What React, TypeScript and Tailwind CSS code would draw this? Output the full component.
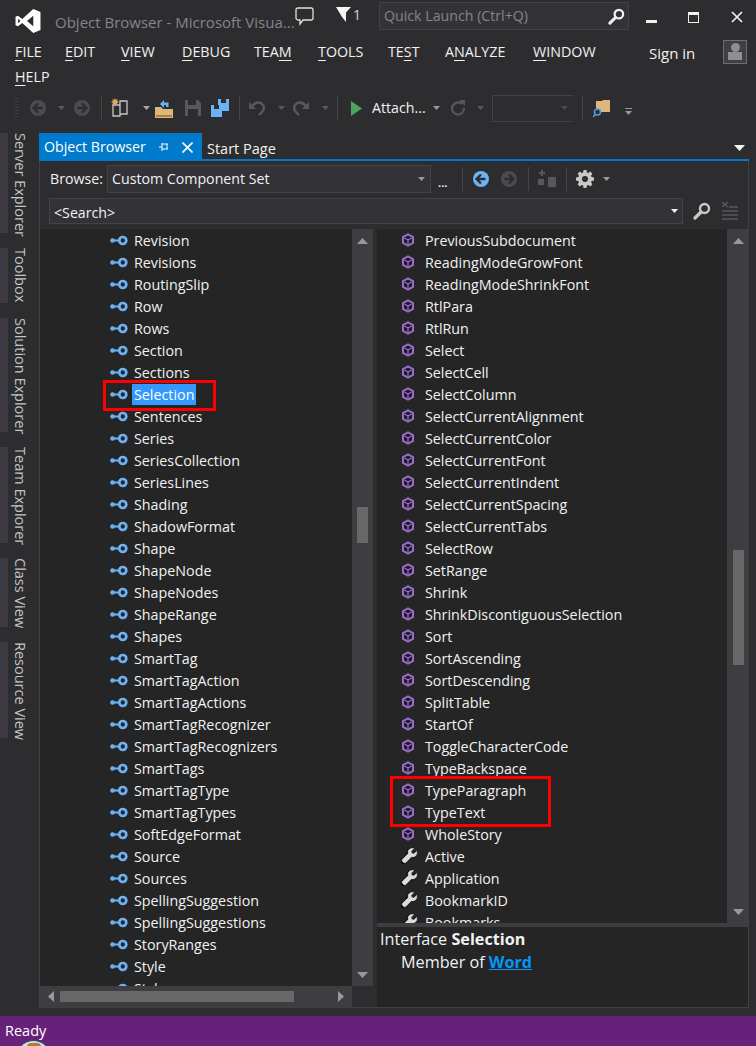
import React from "react";

const leftNames = ["Revision","Revisions","RoutingSlip","Row","Rows","Section","Sections","Selection","Sentences","Series","SeriesCollection","SeriesLines","Shading","ShadowFormat","Shape","ShapeNode","ShapeNodes","ShapeRange","Shapes","SmartTag","SmartTagAction","SmartTagActions","SmartTagRecognizer","SmartTagRecognizers","SmartTags","SmartTagType","SmartTagTypes","SoftEdgeFormat","Source","Sources","SpellingSuggestion","SpellingSuggestions","StoryRanges","Style","Styles"];
const methods = ["PreviousSubdocument","ReadingModeGrowFont","ReadingModeShrinkFont","RtlPara","RtlRun","Select","SelectCell","SelectColumn","SelectCurrentAlignment","SelectCurrentColor","SelectCurrentFont","SelectCurrentIndent","SelectCurrentSpacing","SelectCurrentTabs","SelectRow","SetRange","Shrink","ShrinkDiscontiguousSelection","Sort","SortAscending","SortDescending","SplitTable","StartOf","ToggleCharacterCode","TypeBackspace","TypeParagraph","TypeText","WholeStory"];
const props = ["Active","Application","BookmarkID","Bookmarks"];

const Caret = ({ c = "#999999", cls = "" }: { c?: string; cls?: string }) => (
  <svg width="7" height="4" viewBox="0 0 7 4" className={cls}><path d="M0 0h7L3.5 4z" fill={c} /></svg>
);
const Sep = ({ cls = "" }: { cls?: string }) => <div className={"w-px h-[24px] bg-[#46464a] " + cls} />;

const InterfaceIcon = () => (
  <svg width="18" height="11" viewBox="0 0 18 11">
    <circle cx="2.5" cy="5.5" r="2.3" fill="#6cb3f5" />
    <rect x="4" y="4.500" width="5" height="2" fill="#6cb3f5" />
    <circle cx="12.8" cy="5.500" r="3.500" fill="none" stroke="#6cb3f5" strokeWidth="2.700" />
  </svg>
);
const CubeIcon = () => (
  <svg width="14" height="14" viewBox="0 0 14 14">
    <path d="M7 1.300 12 4.100v5.800L7 12.700 2 9.900V4.100z" fill="#1d1a22" stroke="#9a6cc9" strokeWidth="2" />
    <path d="M3.500 5 7 7l3.500-2M7 7v4" fill="none" stroke="#9a6cc9" strokeWidth="1.300" />
  </svg>
);
const WrenchIcon = () => (
  <svg width="17" height="16" viewBox="0 0 17 16">
    <path d="M15.500 3.400 12.800 6 10.500 5.500 10 3.300 12.600.8C10.400.1 8 1 7.300 3.100c-.3 1-.2 1.900.1 2.600L1.700 11c-.7.700-.7 1.800 0 2.500l.8.800c.7.700 1.800.7 2.500 0l5.400-5.600c.9.300 2 .3 3-.1 1.900-.9 2.800-3 2.100-5.200z" fill="#000000" stroke="#000000" strokeWidth="1.600" transform="translate(-.8 .6)" />
    <path d="M15.500 3.400 12.800 6 10.500 5.500 10 3.300 12.600.8C10.400.1 8 1 7.300 3.100c-.3 1-.2 1.900.1 2.600L1.700 11c-.7.700-.7 1.800 0 2.500l.8.800c.7.700 1.800.7 2.500 0l5.400-5.600c.9.300 2 .3 3-.1 1.900-.9 2.800-3 2.100-5.200z" fill="#dcdcdc" stroke="#dcdcdc" strokeWidth=".7" />
  </svg>
);

const Row = ({ icon, name, indentCls, selected }: { icon: React.ReactNode; name: string; indentCls: string; selected?: boolean }) => (
  <div className={"h-[22px] shrink-0 flex items-center text-[14.3px] " + indentCls}>
    <div className="w-[22px] flex justify-start items-center shrink-0">{icon}</div>
    <span className={"h-[21px] leading-[21px] px-[2px] whitespace-nowrap " + (selected ? "bg-[#3399ff] text-white" : "")}>{name}</span>
  </div>
);

const Gear = () => (
  <svg width="18" height="18" viewBox="0 0 18 18">
    <path d="M7.5 0h3l.4 2.4 1.4.6 2-1.4 2.1 2.1-1.4 2 .6 1.4L18 7.5v3l-2.4.4-.6 1.4 1.4 2-2.1 2.1-2-1.4-1.4.6-.4 2.4h-3l-.4-2.4-1.4-.6-2 1.4-2.1-2.1 1.4-2-.6-1.4L0 10.500v-3l2.400-.4.6-1.4-1.400-2 2.100-2.100 2 1.400 1.400-.6z" fill="#c8c8c8" />
    <circle cx="9" cy="9" r="3" fill="#2d2d30" />
  </svg>
);
const Round = ({ bg, fg }: { bg: string; fg: string }) => (
  <svg width="16" height="16" viewBox="0 0 16 16">
    <circle cx="8" cy="8" r="8" fill={bg} />
    <path d="M8 3.500 3.500 8 8 12.500M4 8h8.500" fill="none" stroke={fg} strokeWidth="2.300" />
  </svg>
);
const RoundR = ({ bg, fg }: { bg: string; fg: string }) => (
  <svg width="16" height="16" viewBox="0 0 16 16">
    <circle cx="8" cy="8" r="8" fill={bg} />
    <path d="M8 3.500 12.500 8 8 12.500M12 8H3.500" fill="none" stroke={fg} strokeWidth="2.300" />
  </svg>
);
const Magnifier = ({ size = 18, c = "#d0d0d0" }: { size?: number; c?: string }) => (
  <svg width={size} height={size} viewBox="0 0 18 18">
    <circle cx="11.500" cy="6.500" r="4.500" fill="none" stroke={c} strokeWidth="2.400" />
    <path d="M8 10 2 16" stroke={c} strokeWidth="3.200" strokeLinecap="round" />
  </svg>
);

const Menu = ({ w, pre, u, post }: { w: string; pre?: string; u: string; post?: string }) => (
  <div className={"text-[14.3px] whitespace-nowrap shrink-0 " + w}>
    {pre}<span className="underline underline-offset-[3px] decoration-1">{u}</span>{post}
  </div>
);

const RailTab = ({ label, h }: { label: string; h: string }) => (
  <div className={"flex shrink-0 " + h}>
    <div className="w-[8px] bg-[#3a3a40] shrink-0" />
    <div className="ml-[5px] text-[#c4c4c4] text-[14.5px] leading-[15px] whitespace-nowrap [writing-mode:vertical-rl]">{label}</div>
  </div>
);

export default function App() {
  return (
    <div className="relative w-[756px] h-[1046px] overflow-hidden flex flex-col bg-[#2d2d30] text-[#f1f1f1] font-['Open_Sans',sans-serif] text-[14px]">
      {/* title bar */}
      <div className="h-[40px] shrink-0 flex items-start">
        <svg width="26" height="24" viewBox="0 0 26 25" className="ml-[15px] mt-[9px] shrink-0">
          <path d="M18.500 0 26 3v19l-7.500 3L7 14.500 2.500 18 0 16.800V8.200L2.500 7 7 10.500zM18.500 7 12 12.500l6.500 5.500zM2.800 10.200v4.600l2.400-2.300z" fill="#ffffff" fillRule="evenodd" />
        </svg>
        <div className="ml-[14px] mt-[11px] text-[15px] leading-[22px] text-[#85858b] whitespace-nowrap w-[240px] shrink-0">Object Browser - Microsoft Visua...</div>
        <svg width="19" height="19" viewBox="0 0 19 19" className="mt-[7px] shrink-0">
          <path d="M3 1h13a2 2 0 0 1 2 2v8a2 2 0 0 1-2 2H8l-3 4v-4H3a2 2 0 0 1-2-2V3a2 2 0 0 1 2-2z" fill="none" stroke="#e0e0e0" strokeWidth="1.300" />
        </svg>
        <svg width="15" height="16" viewBox="0 0 15 16" className="ml-[22px] mt-[7px] shrink-0"><path d="M0 0h15L10 5.500V15L6 10z" fill="#f4f4f4" /></svg>
        <div className="ml-[2px] mt-[5px] text-[14px] leading-[20px] text-[#d8d8d8] w-[26px] shrink-0">1</div>
        <div className="mt-[2px] w-[250px] h-[28px] shrink-0 bg-[#333337] border border-[#434346] flex items-center pl-[4px] pr-[3px] justify-between text-[#85858b] text-[14.2px]">
          <span>Quick Launch (Ctrl+Q)</span>
          <Magnifier size={17} c="#f1f1f1" />
        </div>
        <div className="ml-[17px] mt-[20px] w-[11px] h-[3px] bg-[#f1f1f1] shrink-0" />
        <div className="ml-[31px] mt-[12px] w-[11px] h-[11px] border border-[#f1f1f1] border-t-[3px] shrink-0" />
        <svg width="12" height="12" viewBox="0 0 12 12" className="ml-[32px] mt-[11px] shrink-0"><path d="M1 1l10 10M11 1 1 11" stroke="#f1f1f1" strokeWidth="1.700" /></svg>
      </div>
      {/* menu */}
      <div className="h-[25px] shrink-0 flex items-center pl-[15px] pb-[2px]">
        <Menu w="w-[50px]" u="F" post="ILE" />
        <Menu w="w-[56px]" u="E" post="DIT" />
        <Menu w="w-[61px]" u="V" post="IEW" />
        <Menu w="w-[72px]" u="D" post="EBUG" />
        <Menu w="w-[64px]" pre="TEA" u="M" />
        <Menu w="w-[70px]" u="T" post="OOLS" />
        <Menu w="w-[57px]" pre="TE" u="S" post="T" />
        <Menu w="w-[88px]" pre="A" u="N" post="ALYZE" />
        <Menu w="w-[116px]" u="W" post="INDOW" />
        <div className="w-[74px] text-[15px] shrink-0 mt-[3px]">Sign in</div>
        <div className="w-[24px] h-[24px] shrink-0 border border-[#6e6e6e] bg-[#3f3f46] flex flex-col items-center justify-end">
          <div className="w-[9px] h-[9px] rounded-full bg-[#8f8f8f]" />
          <div className="w-[14px] h-[8px] bg-[#8f8f8f] mb-[3px]" />
        </div>
      </div>
      <div className="h-[25px] shrink-0 flex items-center pl-[15px] pb-[2px]">
        <Menu w="w-[50px]" u="H" post="ELP" />
      </div>
      {/* toolbar */}
      <div className="h-[28px] mt-[4px] shrink-0 flex items-center">
        <div className="ml-[15px] w-[4px] h-[22px] shrink-0 [background-image:radial-gradient(#3c3c40_0.7px,transparent_0.8px)] [background-size:2px_3px]" />
        <div className="ml-[11px] shrink-0"><Round bg="#4c4c50" fg="#2d2d30" /></div>
        <Caret c="#5a5a5e" cls="ml-[12px] shrink-0" />
        <div className="ml-[9px] shrink-0"><RoundR bg="#4c4c50" fg="#2d2d30" /></div>
        <Sep cls="ml-[11px] shrink-0" />
        <svg width="18" height="20" viewBox="0 0 18 20" className="ml-[9px] shrink-0">
          <path d="M2 7h7v11H2zM9 3h7v13H9z" fill="#2d2d30" stroke="#c8c8c8" strokeWidth="1.300" />
          <path d="M4 0l1 2 2-1-1 2 2 1-2 1 1 2-2-1-1 2-1-2-2 1 1-2-2-1 2-1-1-2 2 1z" fill="#d8a860" />
        </svg>
        <Caret c="#aaaaaa" cls="ml-[14px] shrink-0" />
        <svg width="18" height="19" viewBox="0 0 18 19" className="ml-[5px] shrink-0">
          <path d="M0 8h6l2 2h10v9H0z" fill="#dcb67a" />
          <path d="M1 16h16v2H1z" fill="#a87f3e" />
          <path d="M5 5 9 1v2.500h4.500V8H11V6H9v3z" fill="#6cb3f5" />
        </svg>
        <svg width="16" height="16" viewBox="0 0 16 16" className="ml-[12px] shrink-0"><path d="M0 0h13l3 3v13H0zM3 0v5h8V0zM3 9v7h10V9z" fill="#58585c" fillRule="evenodd" /></svg>
        <svg width="18" height="18" viewBox="0 0 18 18" className="ml-[10px] shrink-0">
          <path d="M7 0h11v12H7z" fill="#6cb3f5" /><path d="M0 6h11v12H0z" fill="#6cb3f5" />
          <path d="M10 0h5v4h-5zM3 6h5v4H3z" fill="#2d2d30" />
        </svg>
        <Sep cls="ml-[10px] shrink-0" />
        <svg width="16" height="16" viewBox="0 0 16 16" className="ml-[9px] shrink-0"><path d="M3 7C5 2 11 1 14 5c2 3 0 7-4 10" fill="none" stroke="#58585c" strokeWidth="2.600" /><path d="M0 2v7h7z" fill="#58585c" /></svg>
        <Caret c="#58585c" cls="ml-[13px] shrink-0" />
        <svg width="16" height="16" viewBox="0 0 16 16" className="ml-[8px] shrink-0"><path d="M13 7C11 2 5 1 2 5c-2 3 0 7 4 10" fill="none" stroke="#58585c" strokeWidth="2.600" /><path d="M16 2v7H9z" fill="#58585c" /></svg>
        <Caret c="#58585c" cls="ml-[13px] shrink-0" />
        <Sep cls="ml-[8px] shrink-0" />
        <svg width="12" height="15" viewBox="0 0 12 15" className="ml-[13px] shrink-0"><path d="M0 0l11 7.500L0 15z" fill="#4ea45c" /></svg>
        <div className="ml-[9px] text-[14.2px] shrink-0 w-[57px] whitespace-nowrap">Attach...</div>
        <Caret c="#999999" cls="ml-[4px] shrink-0" />
        <svg width="16" height="16" viewBox="0 0 16 16" className="ml-[10px] shrink-0"><path d="M12 4a6 6 0 1 0 2 4" fill="none" stroke="#58585c" strokeWidth="2.200" /><path d="M9 0h6v6z" fill="#58585c" /></svg>
        <Caret c="#58585c" cls="ml-[11px] shrink-0" />
        <div className="ml-[8px] w-[81px] h-[27px] shrink-0 border-l border-t border-b border-[#434346] flex items-center justify-end pr-[5px]"><Caret c="#4c4c50" /></div>
        <Sep cls="ml-[9px] shrink-0" />
        <svg width="18" height="19" viewBox="0 0 18 19" className="ml-[10px] shrink-0">
          <path d="M3 2h6l1-1h7v12H3z" fill="#dcb67a" />
          <circle cx="4.500" cy="13" r="3" fill="#2d2d30" stroke="#4e9de6" strokeWidth="1.500" /><path d="M2.500 15.500 0 18" stroke="#4e9de6" strokeWidth="1.600" />
        </svg>
        <div className="ml-[14px] mt-[7px] flex flex-col items-center shrink-0 gap-[2px]"><div className="w-[7px] h-px bg-[#999]" /><Caret c="#999999" /></div>
      </div>
      {/* body */}
      <div className="flex mt-[11px] flex-1 min-h-0 h-0">
        {/* rail */}
        <div className="w-[39px] shrink-0 flex flex-col gap-[15px]">
          <RailTab label="Server Explorer" h="h-[100px]" />
          <RailTab label="Toolbox" h="h-[55px]" />
          <RailTab label="Solution Explorer" h="h-[114px]" />
          <RailTab label="Team Explorer" h="h-[96px]" />
          <RailTab label="Class View" h="h-[69px]" />
          <RailTab label="Resource View" h="h-[96px]" />
        </div>
        {/* document well */}
        <div className="w-[710px] shrink-0 flex flex-col">
          {/* tabs */}
          <div className="h-[28px] shrink-0 flex border-b-[2px] border-[#007acc]">
            <div className="w-[163px] h-[28px] shrink-0 bg-[#007acc] flex items-center pl-[5px] text-white text-[14.2px]">
              <span className="w-[115px] whitespace-nowrap">Object Browser</span>
              <svg width="10" height="10" viewBox="0 0 10 10" className="shrink-0"><path d="M0 5h3M3 1v8M3 2h6M3 7h6M8 2v5" stroke="#fff" fill="none" /></svg>
              <svg width="11" height="11" viewBox="0 0 11 11" className="ml-[13px] shrink-0"><path d="M.5.500l10 10M10.500.500l-10 10" stroke="#fff" strokeWidth="1.600" /></svg>
            </div>
            <div className="ml-[5px] text-[14.5px] pt-[5px] flex-1 whitespace-nowrap">Start Page</div>
            <div className="w-[14px] shrink-0 mr-[1px] pt-[12px] flex"><svg width="11" height="6" viewBox="0 0 11 6"><path d="M0 0h11L5.500 6z" fill="#f1f1f1" /></svg></div>
          </div>
          {/* object browser frame */}
          <div className="flex-1 min-h-0 flex flex-col border-l border-r border-b border-[#3f3f46]">
            {/* browse row */}
            <div className="h-[35px] shrink-0 flex items-center pl-[10px]">
              <span className="w-[57px] shrink-0 text-[14.2px]">Browse:</span>
              <div className="w-[324px] h-[28px] shrink-0 bg-[#333337] border border-[#434346] flex items-center justify-between pl-[4px] pr-[5px] text-[14.2px]">
                <span>Custom Component Set</span><Caret c="#999999" />
              </div>
              <span className="w-[31px] shrink-0 pl-[7px] text-[11px] leading-[10px] mt-[8px] font-bold">...</span>
              <Sep cls="shrink-0" />
              <div className="ml-[10px] shrink-0"><Round bg="#6cb3f5" fg="#2d2d30" /></div>
              <div className="ml-[12px] shrink-0"><RoundR bg="#4c4c50" fg="#2d2d30" /></div>
              <Sep cls="ml-[11px] shrink-0" />
              <svg width="18" height="17" viewBox="0 0 18 17" className="ml-[9px] shrink-0"><path d="M3 0h2v2h2v2H5v2H3V4H1V2h2zM0 9h6v6H0zM10 7h8v10h-8z" fill="#58585c" /></svg>
              <Sep cls="ml-[10px] shrink-0" />
              <div className="ml-[9px] shrink-0"><Gear /></div>
              <Caret c="#999999" cls="ml-[9px] shrink-0" />
            </div>
            {/* search row */}
            <div className="h-[26px] mt-[2px] shrink-0 flex items-center pl-[9px]">
              <div className="w-[634px] h-[26px] shrink-0 bg-[#333337] border border-[#434346] flex items-center justify-between pl-[4px] pr-[4px] text-[14.2px]">
                <span className="mt-[4px]">&lt;Search&gt;</span><Caret c="#f1f1f1" />
              </div>
              <div className="ml-[10px] shrink-0"><Magnifier size={18} c="#c8c8c8" /></div>
              <svg width="16" height="18" viewBox="0 0 16 18" className="ml-[11px] shrink-0">
                <path d="M0 0l6 5M6 0 0 5M7 5h9M0 9h16M0 13h16M0 17h16" stroke="#58585c" strokeWidth="1.500" fill="none" />
              </svg>
            </div>
            {/* panes */}
            <div className="mt-[5px] flex-1 min-h-0 flex">
              {/* left pane */}
              <div className="w-[333px] shrink-0 flex flex-col">
                <div className="flex-1 min-h-0 flex">
                  <div className="w-[312px] shrink-0 bg-[#252526] overflow-hidden flex flex-col">
                    {leftNames.map((n) => (
                      <Row key={n} icon={<InterfaceIcon />} name={n} indentCls="pl-[70px]" selected={n === "Selection"} />
                    ))}
                  </div>
                  <div className="w-[21px] shrink-0 bg-[#3e3e42] flex flex-col items-center">
                    <svg width="11" height="6" viewBox="0 0 11 6" className="mt-[9px] shrink-0"><path d="M0 6h11L5.500 0z" fill="#999999" /></svg>
                    <div className="w-[11px] h-[36px] mt-[263px] bg-[#686868] shrink-0" />
                    <svg width="11" height="6" viewBox="0 0 11 6" className="mt-auto mb-[8px] shrink-0"><path d="M0 0h11L5.500 6z" fill="#999999" /></svg>
                  </div>
                </div>
                <div className="h-[21px] shrink-0 flex">
                  <div className="w-[312px] shrink-0 bg-[#3e3e42] flex items-center">
                    <svg width="6" height="11" viewBox="0 0 6 11" className="ml-[8px] shrink-0"><path d="M6 0v11L0 5.500z" fill="#999999" /></svg>
                    <div className="ml-[6px] w-[234px] h-[11px] bg-[#686868] shrink-0" />
                    <svg width="6" height="11" viewBox="0 0 6 11" className="ml-[44px] shrink-0"><path d="M0 0v11l6-5.500z" fill="#999999" /></svg>
                  </div>
                </div>
              </div>
              {/* right pane */}
              <div className="ml-[4px] flex-1 min-w-0 flex flex-col">
                <div className="h-[694px] shrink-0 flex">
                  <div className="w-[350px] shrink-0 bg-[#252526] overflow-hidden flex flex-col">
                    {methods.map((n) => (
                      <Row key={n} icon={<CubeIcon />} name={n} indentCls="pl-[24px]" />
                    ))}
                    {props.map((n) => (
                      <Row key={n} icon={<WrenchIcon />} name={n} indentCls="pl-[24px]" />
                    ))}
                  </div>
                  <div className="w-[22px] shrink-0 bg-[#3e3e42] flex flex-col items-center">
                    <svg width="11" height="6" viewBox="0 0 11 6" className="mt-[9px] shrink-0"><path d="M0 6h11L5.500 0z" fill="#999999" /></svg>
                    <div className="w-[11px] h-[115px] mt-[306px] bg-[#686868] shrink-0" />
                    <svg width="11" height="6" viewBox="0 0 11 6" className="mt-auto mb-[8px] shrink-0"><path d="M0 0h11L5.500 6z" fill="#999999" /></svg>
                  </div>
                </div>
                <div className="h-[4px] shrink-0 bg-[#3e3e42]" />
                <div className="flex-1 bg-[#252526] pl-[3px] pt-[1px] text-[16.2px] leading-[23px]">
                  <div>Interface <span className="font-bold">Selection</span></div>
                  <div className="pl-[21px]">Member of <span className="font-bold text-[#0097fb] underline">Word</span></div>
                </div>
              </div>
            </div>
          </div>
        </div>
      </div>
      <div className="h-[8px] shrink-0" />
      {/* status bar */}
      <div className="h-[30px] shrink-0 bg-[#68217a] text-[14.5px] text-white pl-[5px] pt-[5px] leading-[20px]">Ready</div>

      {/* annotations and overlays */}
      <div className="absolute left-[103px] top-[380px] w-[113px] h-[31px] border-[3px] border-[#ff0000]" />
      <div className="absolute left-[390px] top-[776px] w-[161px] h-[51px] border-[3px] border-[#ff0000]" />
      <div className="absolute left-[16px] top-[1040px] w-[35px] h-[35px] rounded-full bg-[#cfe0e0] border border-[#1d4a63] flex justify-center pt-[2px]">
        <div className="w-[14px] h-[8px] rounded-full bg-[#b5763c]" />
      </div>
    </div>
  );
}
